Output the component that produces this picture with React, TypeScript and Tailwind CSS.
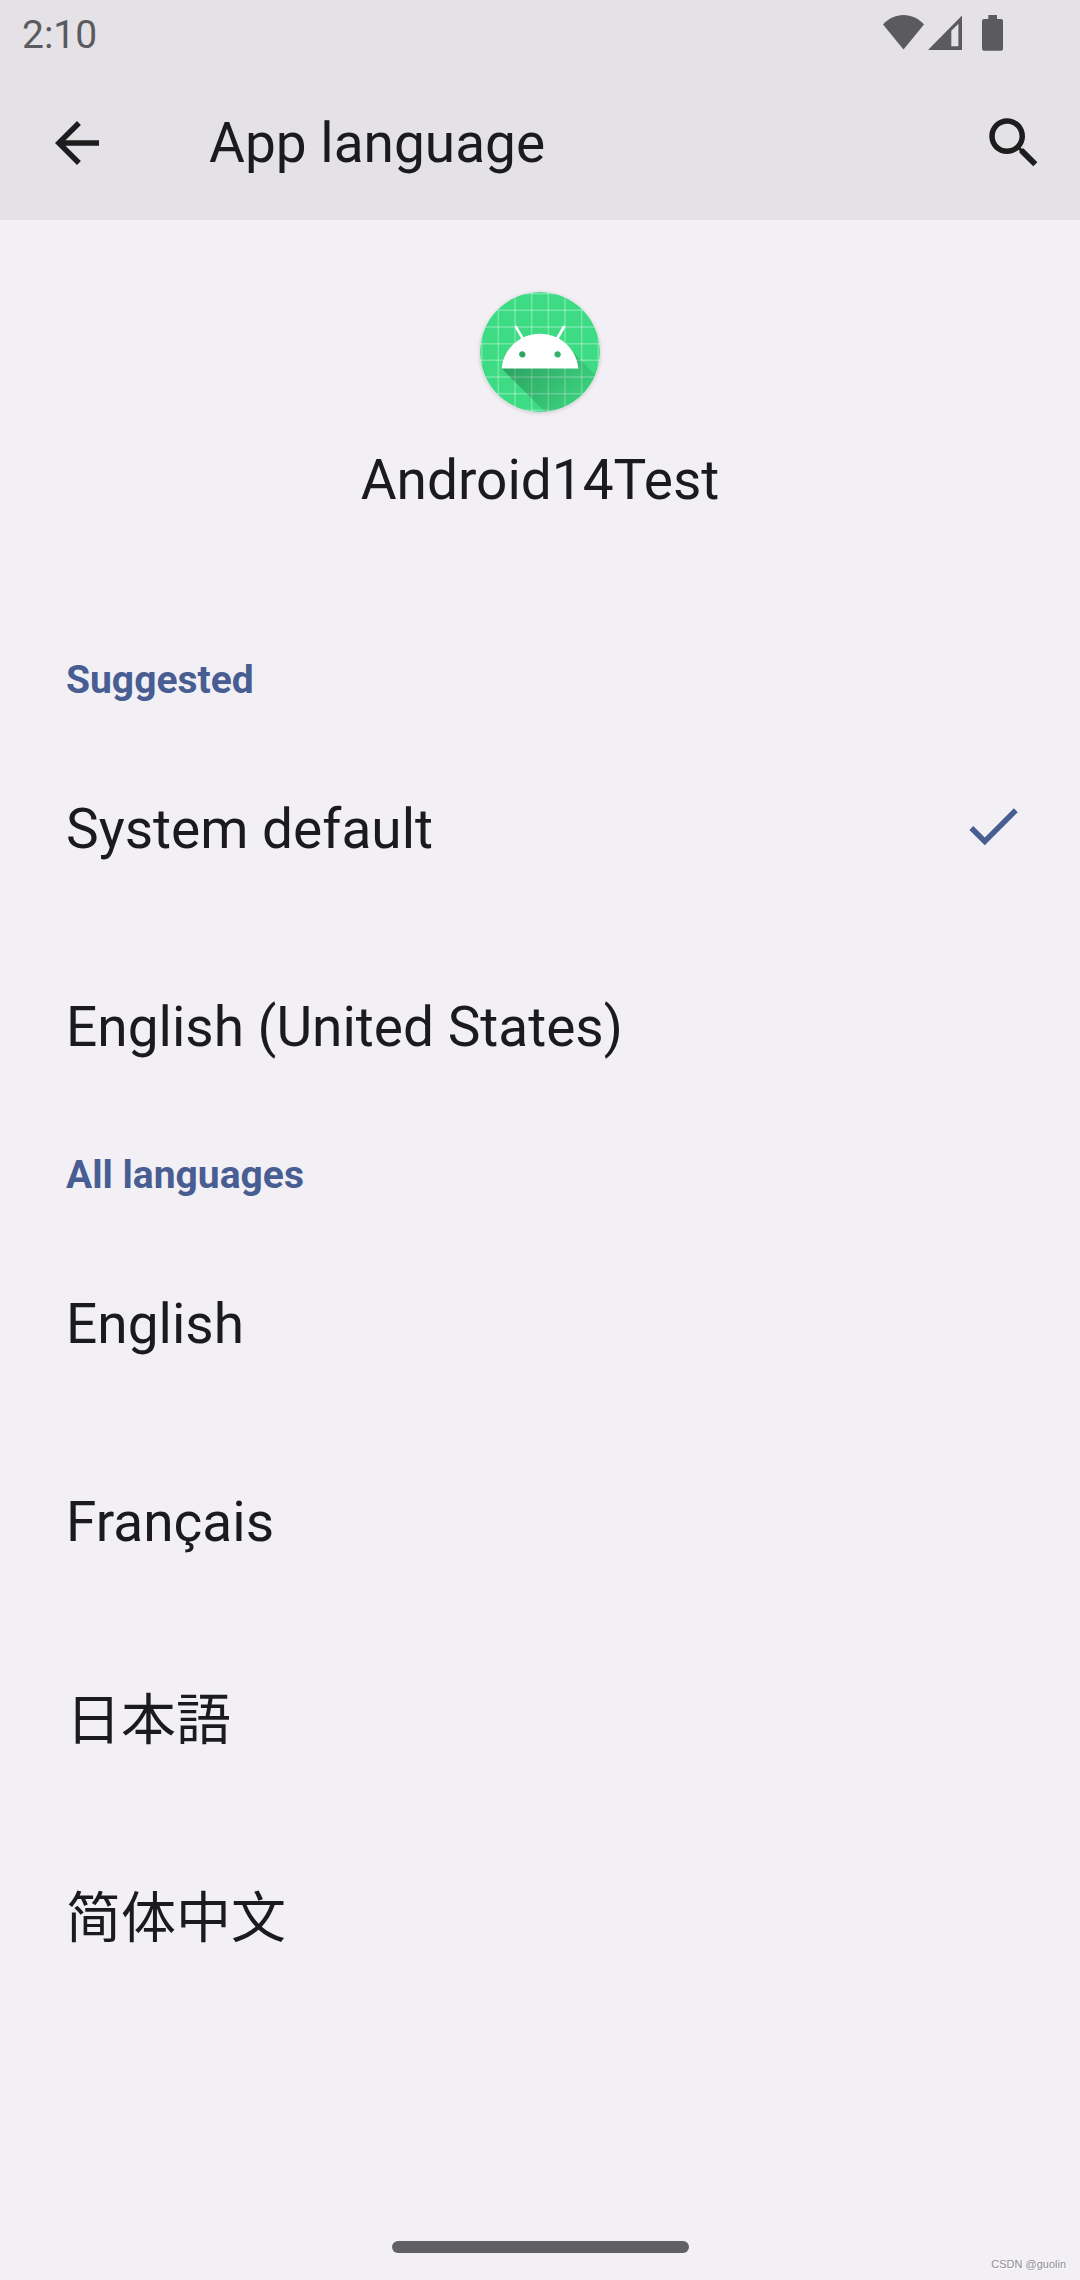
import { useState } from "react";

type Language = { id: string; label: string; lang: string };

const sections: { title: string; items: Language[] }[] = [
  {
    title: "Suggested",
    items: [
      { id: "system", label: "System default", lang: "en" },
      { id: "en-US", label: "English (United States)", lang: "en" },
    ],
  },
  {
    title: "All languages",
    items: [
      { id: "en", label: "English", lang: "en" },
      { id: "fr", label: "Français", lang: "fr" },
      { id: "ja", label: "日本語", lang: "ja" },
      { id: "zh-Hans", label: "简体中文", lang: "zh-Hans" },
    ],
  },
];

const gridLines = [19, 29, 39, 49, 59, 69, 79, 89];

function StatusBar() {
  return (
    <div className="flex h-[66px] items-center justify-between pl-[22px] pr-[77px] text-[#5b5b5d]">
      <span className="pt-1 text-[39px] leading-[46px]">2:10</span>
      <div className="flex items-center">
        <svg className="mr-1 h-9 w-[41px]" viewBox="0 0 41 36" fill="currentColor">
          <path d="M20.5 34.5L0 9.5C5.5 3.5 12.5 0 20.5 0S35.5 3.5 41 9.5z" />
        </svg>
        <svg className="mr-5 h-9 w-[34px]" viewBox="0 0 34 36" fill="currentColor">
          <path
            fillRule="evenodd"
            d="M0 35L34 .5V35zM23.3 15.8V31.3H30.4V8.7z"
          />
        </svg>
        <svg className="h-9 w-[21px]" viewBox="0 0 21 36" fill="currentColor">
          <path d="M6.3 0h8.7v4H19a2 2 0 0 1 2 2v27.700a2 2 0 0 1-2 2H2a2 2 0 0 1-2-2V6a2 2 0 0 1 2-2h4.300z" />
        </svg>
      </div>
    </div>
  );
}

function AppIcon() {
  return (
    <svg
      className="size-[120px] rounded-full shadow-[0_1px_4px_rgba(0,0,0,0.16)]"
      viewBox="18 18 72 72"
    >
      <defs>
        <linearGradient
          id="cast"
          gradientUnits="userSpaceOnUse"
          x1="42.95"
          y1="49.6"
          x2="85.85"
          y2="92.5"
        >
          <stop offset="0" stopColor="#000" stopOpacity="0.27" />
          <stop offset="1" stopColor="#000" stopOpacity="0" />
        </linearGradient>
        <clipPath id="disc">
          <circle cx="54" cy="54" r="36" />
        </clipPath>
      </defs>
      <g clipPath="url(#disc)">
        <path fill="#3ddc84" d="M18 18h72v72H18z" />
        {gridLines.map((n) => (
          <path
            key={n}
            d={`M${n} 18V90M18 ${n}H90`}
            stroke="#fff"
            strokeOpacity="0.3"
            strokeWidth="0.9"
          />
        ))}
        <path
          fill="url(#cast)"
          d="M31,63.928c0,0 6.4,-11 12.1,-13.1c7.2,-2.6 26,-1.4 26,-1.4l38.1,38.1L107,108.928l-32,-1L31,63.928z"
        />
        <path
          fill="#fff"
          fillRule="evenodd"
          d="M65.3,45.828l3.8,-6.6c0.2,-0.4 0.1,-0.9 -0.3,-1.1c-0.4,-0.2 -0.9,-0.1 -1.1,0.3l-3.9,6.7c-6.3,-2.8 -13.4,-2.8 -19.7,0l-3.9,-6.7c-0.2,-0.4 -0.7,-0.5 -1.1,-0.3C38.8,38.328 38.7,38.828 38.9,39.228l3.8,6.6C36.2,49.428 31.7,56.028 31,63.928h46C76.3,56.028 71.8,49.428 65.3,45.828zM43.4,57.328c-0.8,0 -1.5,-0.5 -1.8,-1.2c-0.3,-0.7 -0.1,-1.5 0.4,-2.1c0.5,-0.5 1.4,-0.7 2.1,-0.4c0.7,0.3 1.2,1 1.2,1.8C45.3,56.528 44.5,57.328 43.4,57.328zM64.6,57.328c-0.8,0 -1.5,-0.5 -1.8,-1.2s-0.1,-1.5 0.4,-2.1c0.5,-0.5 1.4,-0.7 2.1,-0.4c0.7,0.3 1.2,1 1.2,1.8C66.5,56.528 65.6,57.328 64.6,57.328z"
        />
      </g>
    </svg>
  );
}

export default function App() {
  const [selected, setSelected] = useState("system");

  return (
    <div className="relative flex min-h-screen flex-col bg-[#f2f0f5] font-[Roboto,'Noto_Sans_CJK_SC',sans-serif] text-[#1b1b1f]">
      <header className="bg-[#e4e2e7]">
        <StatusBar />
        <div className="flex h-[154px] items-center pl-11 pr-[33px]">
          <button type="button" aria-label="Back" className="mr-[99px] size-[66px]">
            <svg className="size-full" viewBox="0 0 24 24" fill="#1d1d1d">
              <path d="M20 11H7.83l5.59-5.59L12 4l-8 8 8 8 1.410-1.410L7.830 13H20v-2z" />
            </svg>
          </button>
          <h1 className="flex-1 text-[55px] leading-[64px]">App language</h1>
          <button type="button" aria-label="Search" className="size-[66px]">
            <svg className="size-full" viewBox="0 0 24 24" fill="#1d1d1d">
              <path d="M15.500 14h-.79l-.28-.27C15.410 12.590 16 11.110 16 9.500 16 5.910 13.090 3 9.500 3S3 5.910 3 9.500 5.910 16 9.500 16c1.610 0 3.090-.59 4.230-1.570l.27.28v.79l5 4.990L20.490 19l-4.990-5zm-6 0C7.010 14 5 11.990 5 9.500S7.010 5 9.500 5 14 7.010 14 9.500 11.990 14 9.500 14z" />
            </svg>
          </button>
        </div>
      </header>

      <main className="flex-1">
        <div className="flex flex-col items-center gap-9 pb-[116px] pt-[72px]">
          <AppIcon />
          <p className="text-[55px] leading-[64px]">Android14Test</p>
        </div>

        {sections.map((section) => (
          <section key={section.title} role="radiogroup" aria-label={section.title}>
            <h2 className="flex h-[99px] items-center px-[66px] pt-1 text-[39px] font-bold leading-[46px] text-[#485d92]">
              {section.title}
            </h2>
            {section.items.map((item) => (
              <label
                key={item.id}
                className="flex h-[198px] cursor-pointer items-center justify-between pl-[66px] pr-[54px]"
              >
                <input
                  type="radio"
                  name="language"
                  value={item.id}
                  checked={selected === item.id}
                  onChange={() => setSelected(item.id)}
                  className="peer sr-only"
                />
                <span
                  lang={item.lang}
                  className="pt-1.5 text-[55px] leading-[64px]"
                >
                  {item.label}
                </span>
                <svg
                  className="invisible size-[66px] peer-checked:visible"
                  viewBox="0 0 24 24"
                  fill="#485d92"
                >
                  <path d="M9 16.170L4.830 12l-1.420 1.410L9 19 21 7l-1.410-1.410z" />
                </svg>
              </label>
            ))}
          </section>
        ))}
      </main>

      {/* gesture handle */}
      <footer className="flex justify-center pb-[27px]">
        <div className="h-3 w-[297px] rounded-full bg-[#616063]" />
      </footer>
      <span className="absolute bottom-2 right-[14px] font-['Liberation_Sans',sans-serif] text-[11px] leading-4 text-[#8f8e92] [text-shadow:1px_1px_0_#fff]">
        CSDN @guolin
      </span>
    </div>
  );
}
